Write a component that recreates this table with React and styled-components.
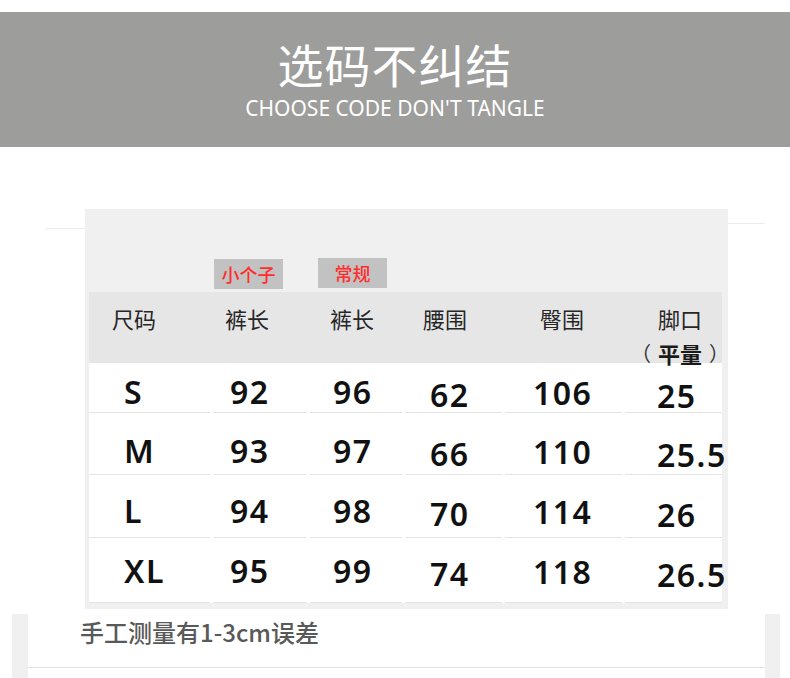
import React from 'react';
import styled, { createGlobalStyle } from 'styled-components';

const GlobalStyle = createGlobalStyle`
  html, body {
    margin: 0;
    padding: 0;
    background: #fff;
  }
  body {
    font-family: "Noto Sans", "Noto Sans CJK SC", sans-serif;
  }
`;

const Page = styled.div`
  width: 790px;
  height: 678px;
  overflow: hidden;
  background: #fff;
`;

const Banner = styled.header`
  margin-top: 12px;
  height: 135px;
  background: #9d9d9c;
  display: flex;
  flex-direction: column;
  align-items: center;
  padding-top: 28px;
  box-sizing: border-box;
`;
const Title = styled.h1`
  margin: 0;
  font-family: "Noto Sans CJK SC", sans-serif;
  font-weight: 400;
  font-size: 46px;
  line-height: 46px;
  letter-spacing: 1px;
  color: #fff;
`;
const Subtitle = styled.div`
  margin-top: 12px;
  font-family: "Noto Sans", sans-serif;
  font-weight: 400;
  font-size: 21px;
  line-height: 21px;
  color: #fff;
`;

const ChartRow = styled.section`
  display: flex;
  align-items: flex-start;
  margin: 62px 0 0 45px;
`;
const SideRule = styled.div`
  width: ${p => p.w}px;
  height: 1px;
  margin-top: ${p => p.top}px;
  background: #ececec;
`;
const Panel = styled.div`
  width: 643px;
  background: #f0f0f0;
  padding: 49px 6px 6px 4px;
  box-sizing: border-box;
`;

const COLS = '124px 97px 95px 100px 120px 97px';

const Grid = styled.div`
  display: grid;
  grid-template-columns: ${COLS};
`;
const TagRow = styled(Grid)`
  height: 34px;
`;
const TagCell = styled.div`
  padding-left: ${p => p.pl || 0}px;
  padding-top: ${p => p.pt || 0}px;
`;
const Tag = styled.span`
  display: flex;
  align-items: center;
  justify-content: center;
  width: 69px;
  height: 30px;
  background: #c2c2c2;
  color: #ff2e2e;
  font-family: "Noto Sans CJK SC", sans-serif;
  font-weight: 500;
  font-size: 18px;
`;

const HeadRow = styled(Grid)`
  height: 71px;
  background: #e6e6e6;
`;
const HeadCell = styled.div`
  padding: 15px 0 0 ${p => p.pl}px;
  display: flex;
  flex-direction: column;
  align-items: ${p => (p.stack ? 'center' : 'flex-start')};
  width: ${p => (p.stack ? 'fit-content' : 'auto')};
  font-family: "Noto Sans CJK SC", sans-serif;
  font-size: 22px;
  line-height: 22px;
  color: #262626;
`;
const HeadNote = styled.span`
  margin-top: 13px;
  width: 98px;
  display: flex;
  justify-content: space-between;
  align-items: center;
  font-size: 20px;
  color: #1a1a1a;
  white-space: nowrap;
`;
const Paren = styled.span`
  font-weight: 400;
  color: #333;
`;
const NoteWord = styled.b`
  font-size: 22px;
  font-weight: 700;
`;

const DataRow = styled(Grid)`
  height: ${p => p.h}px;
  background: #fff;
`;
const DataCell = styled.div`
  box-sizing: border-box;
  padding: ${p => p.pt}px 0 0 ${p => p.pl}px;
  background: linear-gradient(#e4e4e4, #e4e4e4) left bottom / calc(100% - ${p => (p.last ? 0 : 3)}px) 1.5px no-repeat;
  font-family: "Noto Sans", sans-serif;
  font-weight: 600;
  font-size: 32px;
  line-height: 32px;
  letter-spacing: 1.5px;
  color: #111;
  white-space: nowrap;
`;

const Note = styled.footer`
  margin: 5px 10px 0 12px;
  height: 65px;
  background: #f0f0f0;
  padding: 0 15px 0 16px;
`;
const NoteInner = styled.div`
  height: 54px;
  background: #fff;
  border-bottom: 1px solid #e2e2e2;
  padding: 6px 0 0 52px;
  box-sizing: border-box;
  font-family: "Noto Sans CJK SC", sans-serif;
  font-weight: 500;
  font-size: 24px;
  line-height: 24px;
  color: #595959;
`;
const NoteFill = styled.div`
  height: 11px;
  background: #fff;
`;

const columns = [
  { head: '尺码', hpl: 23, dpl: 35, dy: 0 },
  { head: '裤长', hpl: 12, dpl: 17, dy: 0 },
  { head: '裤长', hpl: 20, dpl: 23, dy: 0 },
  { head: '腰围', hpl: 18, dpl: 25, dy: 3 },
  { head: '臀围', hpl: 35, dpl: 28, dy: 1 },
  { head: '脚口', note: '平量', hpl: 6, dpl: 32, dy: 4 },
];

const rows = [
  { h: 50, pt: 13, values: ['S', '92', '96', '62', '106', '25'] },
  { h: 62, pt: 22, values: ['M', '93', '97', '66', '110', '25.5'] },
  { h: 63, pt: 20, values: ['L', '94', '98', '70', '114', '26'] },
  { h: 65, pt: 17, values: ['XL', '95', '99', '74', '118', '26.5'] },
];

export default function App() {
  return (
    <Page>
      <GlobalStyle />
      <Banner>
        <Title>选码不纠结</Title>
        <Subtitle>CHOOSE CODE DON'T TANGLE</Subtitle>
      </Banner>

      <ChartRow>
        <SideRule w={40} top={19} />
        <Panel>
          <TagRow>
            <div />
            <TagCell pl={1} pt={1}>
              <Tag>小个子</Tag>
            </TagCell>
            <TagCell pl={8}>
              <Tag>常规</Tag>
            </TagCell>
          </TagRow>
          <HeadRow>
            {columns.map((c, i) => (
              <HeadCell key={i} pl={c.hpl} stack={!!c.note}>
                <span>{c.head}</span>
                {c.note && (
                  <HeadNote>
                    <Paren>（</Paren>
                    <NoteWord>{c.note}</NoteWord>
                    <Paren>）</Paren>
                  </HeadNote>
                )}
              </HeadCell>
            ))}
          </HeadRow>
          {rows.map(r => (
            <DataRow key={r.values[0]} h={r.h}>
              {r.values.map((v, i) => (
                <DataCell
                  key={i}
                  pl={columns[i].dpl}
                  pt={r.pt + columns[i].dy}
                  last={i === columns.length - 1}
                >
                  {v}
                </DataCell>
              ))}
            </DataRow>
          ))}
        </Panel>
        <SideRule w={37} top={14} />
      </ChartRow>

      <Note>
        <NoteInner>手工测量有1-3cm误差</NoteInner>
        <NoteFill />
      </Note>
    </Page>
  );
}
